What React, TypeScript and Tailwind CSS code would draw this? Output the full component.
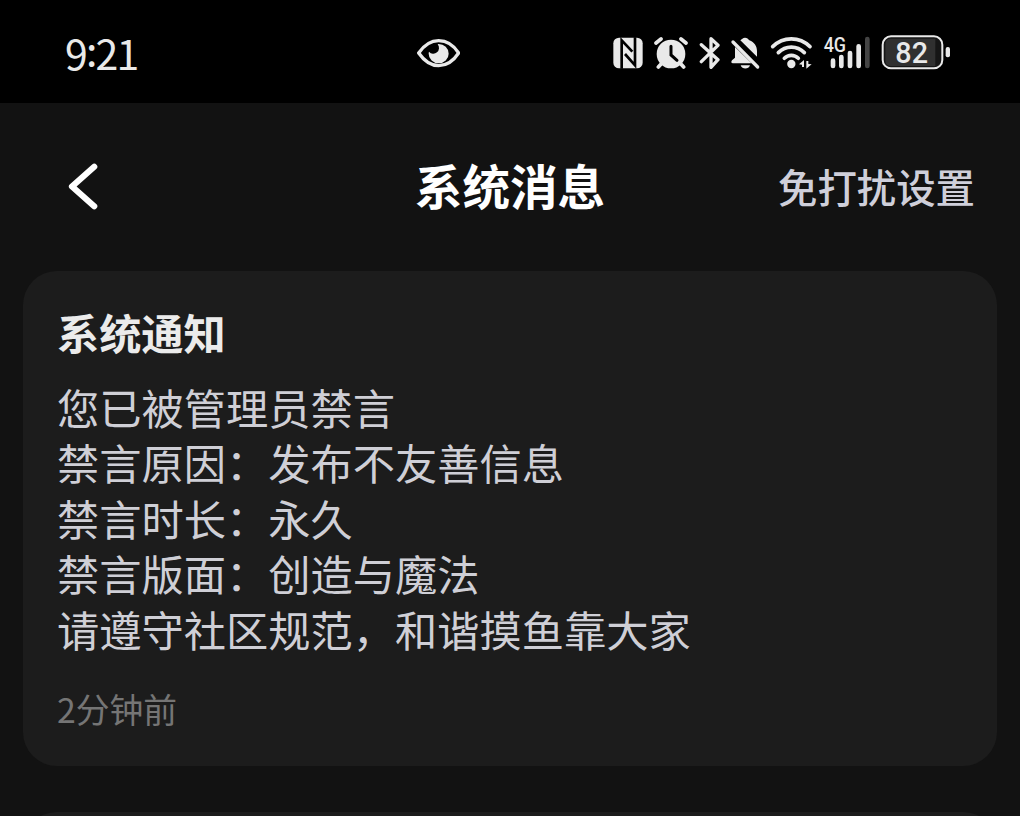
const details = [
  "您已被管理员禁言",
  "禁言原因：发布不友善信息",
  "禁言时长：永久",
  "禁言版面：创造与魔法",
  "请遵守社区规范，和谐摸鱼靠大家",
];

export default function App() {
  return (
    <div
      lang="zh-CN"
      className="flex h-[816px] w-[1020px] flex-col overflow-hidden bg-[#121212] font-['Noto_Sans_CJK_SC',sans-serif]"
    >
      <StatusBar />

      <header className="grid h-[168px] shrink-0 grid-cols-3 items-center px-[45px]">
        <svg className="ml-[23px] h-[48px] w-[32px]" viewBox="0 0 32 48" fill="none">
          <path
            d="M26.2 3.8 4 23.5l22.2 19.7"
            stroke="#fff"
            strokeWidth="6.2"
            strokeLinecap="round"
            strokeLinejoin="round"
          />
        </svg>
        <h1 className="pb-1 text-center text-[47.6px] leading-[60px] font-bold whitespace-nowrap text-white">
          系统消息
        </h1>
        <span className="pb-[2px] text-right text-[39.4px] leading-[60px] font-medium whitespace-nowrap text-[#cfcfda]">
          免打扰设置
        </span>
      </header>

      <main className="flex flex-col gap-[46px] px-[23px]">
        <article className="h-[495px] rounded-[34px] bg-[#1c1c1c] px-[34px] pt-[31px]">
          <h2 className="text-[42.2px] leading-[60px] font-bold text-[#ebebeb]">
            系统通知
          </h2>
          <div className="mt-[17px] text-[42.25px] leading-[55.4px] text-[#cfcfd6]">
            {details.map((line) => (
              <p key={line}>{line}</p>
            ))}
          </div>
          <time className="mt-[31px] block text-[33.8px] leading-[44px] text-[#757575]">
            2分钟前
          </time>
        </article>
        <article className="h-[495px] rounded-[34px] bg-[#1c1c1c]" />
      </main>
    </div>
  );
}

function StatusBar() {
  return (
    <div className="flex h-[103px] shrink-0 items-start bg-black pt-[35px] pr-[69px] pl-[65px] text-[#e9e9e9]">
      <span className="-mt-[1px] w-[352px] text-[41px] leading-[37px] tracking-[-1.8px]">
        9<span className="relative -top-[4px]">:</span>21
      </span>
      {/* eye */}
      <svg className="h-[34.67px] w-[43px]" viewBox="50 30 129 104" fill="none">
        <path
          d="M55 84C71 61 91 47 115 47s45 14 60 37c-15 23-36 38-60 38S71 107 55 84Z"
          stroke="currentColor"
          strokeWidth="10"
          strokeLinejoin="round"
        />
        <path
          d="M115 57a30 29 0 1 1-30 29c0-2 0-4 1-6a15 15 0 0 0 26-22Z"
          fill="currentColor"
        />
      </svg>
      <div className="ml-auto flex">
        {/* nfc */}
        <svg className="h-[34.67px] w-[30px]" viewBox="39 30 90 104">
          <rect x="40" y="38" width="88" height="92" rx="17" fill="currentColor" />
          <path
            d="M65 131V46L97 80M105 37v84L75 87"
            fill="none"
            stroke="#000"
            strokeWidth="8"
          />
        </svg>
        {/* alarm */}
        <svg className="ml-[11px] h-[34.67px] w-[34px]" viewBox="162 30 102 104">
          <circle cx="213" cy="87" r="43" fill="currentColor" />
          <path
            d="m168 54 15-12M258 54l-15-12M184 116l-9 10M242 116l9 10"
            stroke="currentColor"
            strokeWidth="11"
            strokeLinecap="round"
          />
          <path
            d="M213 64v26l18 16"
            fill="none"
            stroke="#000"
            strokeWidth="9"
            strokeLinecap="round"
          />
        </svg>
        {/* bluetooth */}
        <svg className="ml-[11px] h-[34.67px] w-[22px]" viewBox="297 30 66 104">
          <path
            d="m304 59 50 45-21 23V41l21 20-50 49"
            fill="none"
            stroke="currentColor"
            strokeWidth="10"
            strokeLinecap="round"
            strokeLinejoin="round"
          />
        </svg>
        {/* muted bell */}
        <svg className="ml-[9px] h-[34.67px] w-[31px]" viewBox="390 30 93 104">
          <path
            d="M405 66 455 115H399c-6 0-6-6-3-9l9-8Z"
            fill="currentColor"
          />
          <path
            d="M421 46c4-3 8-8 14-8s10 4 13 8c15 6 23 18 23 32v17Z"
            fill="currentColor"
          />
          <path d="M422 121h28c-4 13-24 13-28 0Z" fill="currentColor" />
          <path
            d="m399 51 74 75"
            stroke="currentColor"
            strokeWidth="10"
            strokeLinecap="round"
          />
        </svg>
        {/* wifi */}
        <svg className="ml-[9px] h-[34.67px] w-[43px]" viewBox="30 30 129 104" fill="none">
          <path
            d="M38 65c32-31 80-31 112 0M55 83c22-22 56-22 78 0M73 100c12-12 30-12 42 0"
            stroke="currentColor"
            strokeWidth="11"
            strokeLinecap="round"
          />
          <circle cx="94" cy="117" r="12.5" fill="currentColor" />
          <path d="m117 118 15-13v21h-6v-7Zm38 0-16 13v-23h6v9Z" fill="currentColor" />
        </svg>
        {/* mobile signal */}
        <svg
          className="ml-[10px] h-[34.67px] w-[49px] overflow-visible"
          viewBox="189 30 147 104"
        >
          <text
            x="191"
            y="81"
            textLength="67"
            lengthAdjust="spacingAndGlyphs"
            className="fill-current font-[Roboto,sans-serif] text-[62px] font-medium"
          >
            4G
          </text>
          <path
            d="M219 107v16M244 96v27M270 84v39M296 64v59"
            stroke="currentColor"
            strokeWidth="14"
            strokeLinecap="round"
          />
          <path d="M322 42v81" stroke="#444" strokeWidth="14" strokeLinecap="round" />
        </svg>
        {/* battery */}
        <svg
          className="ml-[9px] h-[34.67px] w-[70px] overflow-visible"
          viewBox="364 30 210 104"
        >
          <rect
            x="369"
            y="34"
            width="179"
            height="96"
            rx="25"
            fill="#161616"
            stroke="currentColor"
            strokeWidth="6"
          />
          <path d="M527 41H393q-16 0-16 18v46q0 18 16 18H527Z" fill="#303030" />
          <rect x="558" y="66" width="13" height="31" rx="6" fill="currentColor" />
          <text
            x="407"
            y="114"
            textLength="98"
            lengthAdjust="spacingAndGlyphs"
            className="fill-current font-[Roboto,sans-serif] text-[89px] font-medium"
          >
            82
          </text>
        </svg>
      </div>
    </div>
  );
}
